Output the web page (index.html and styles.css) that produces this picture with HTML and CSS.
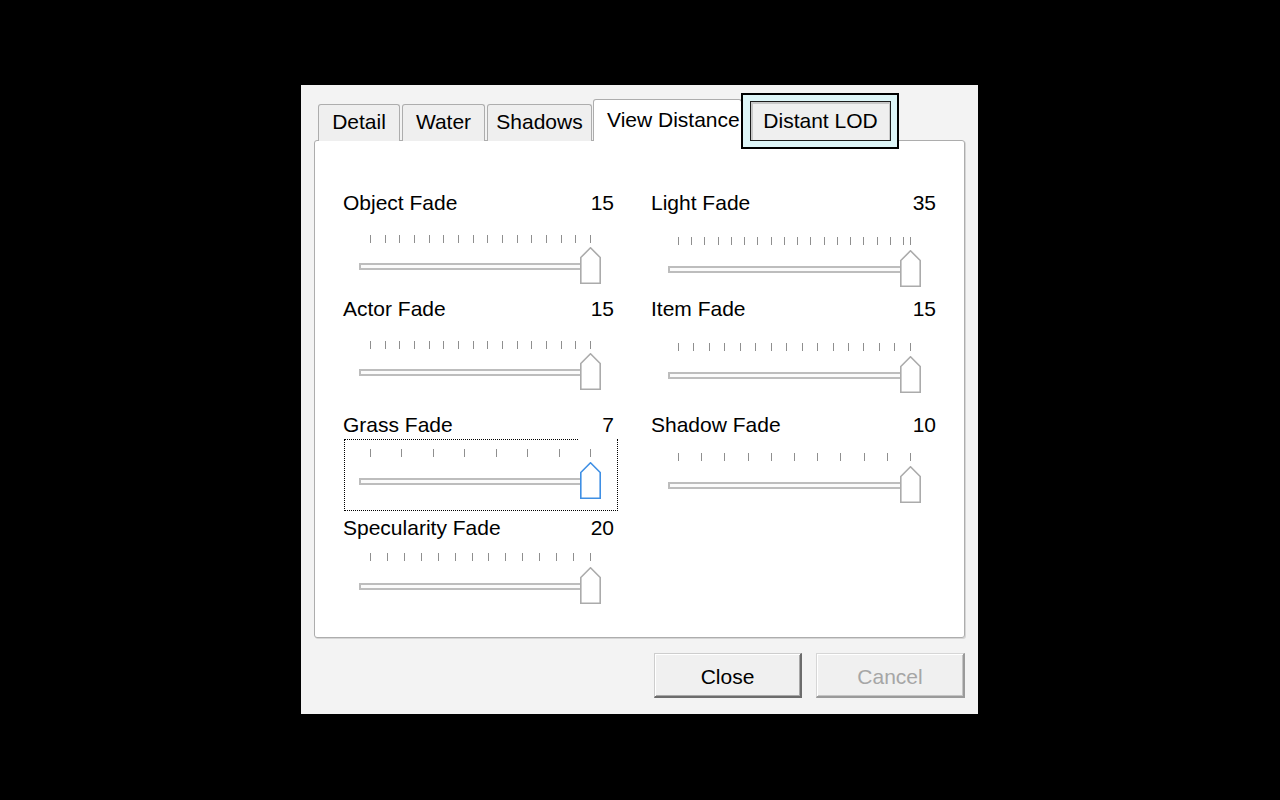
FILE: index.html
```html
<!DOCTYPE html>
<html>
<head>
<meta charset="utf-8">
<link rel="stylesheet" href="styles.css">
</head>
<body>
<div class="dialog">
  <div class="tabs">
    <div class="tab tab-detail">Detail</div>
    <div class="tab tab-water">Water</div>
    <div class="tab tab-shadows">Shadows</div>
    <div class="tab tab-active">View Distance</div>
    <div class="tab-focus"><div class="tab tab-lod">Distant LOD</div></div>
  </div>
  <div class="panel">
    <div class="col col-left">
      <div class="field">
        <div class="head"><span>Object Fade</span><span>15</span></div>
        <div class="slider st-21">
          <div class="ticks"><i></i><i></i><i></i><i></i><i></i><i></i><i></i><i></i><i></i><i></i><i></i><i></i><i></i><i></i><i></i><i></i></div>
          <div class="rail rt-4"><div class="track"></div><svg class="thumb" viewBox="0 0 21 37" width="21" height="37"><polygon points="0.8,10.5 10.5,0.8 20.2,10.5 20.2,36.2 0.8,36.2"/></svg></div>
        </div>
      </div>
      <div class="field fm-14">
        <div class="head"><span>Actor Fade</span><span>15</span></div>
        <div class="slider st-21">
          <div class="ticks"><i></i><i></i><i></i><i></i><i></i><i></i><i></i><i></i><i></i><i></i><i></i><i></i><i></i><i></i><i></i><i></i></div>
          <div class="rail rt-4"><div class="track"></div><svg class="thumb" viewBox="0 0 21 37" width="21" height="37"><polygon points="0.8,10.5 10.5,0.8 20.2,10.5 20.2,36.2 0.8,36.2"/></svg></div>
        </div>
      </div>
      <div class="field fm-24">
        <div class="head"><span>Grass Fade</span><span>7</span></div>
        <div class="slider slider-focused st-13">
          <div class="ticks"><i></i><i></i><i></i><i></i><i></i><i></i><i></i><i></i></div>
          <div class="rail rt-5"><div class="track"></div><svg class="thumb thumb-active" viewBox="0 0 21 37" width="21" height="37"><polygon points="0.8,10.5 10.5,0.8 20.2,10.5 20.2,36.2 0.8,36.2"/></svg></div>
        </div>
      </div>
      <div class="field fm-18">
        <div class="head"><span>Specularity Fade</span><span>20</span></div>
        <div class="slider st-14">
          <div class="ticks"><i></i><i></i><i></i><i></i><i></i><i></i><i></i><i></i><i></i><i></i><i></i><i></i><i></i><i></i></div>
          <div class="rail rt-6"><div class="track"></div><svg class="thumb" viewBox="0 0 21 37" width="21" height="37"><polygon points="0.8,10.5 10.5,0.8 20.2,10.5 20.2,36.2 0.8,36.2"/></svg></div>
        </div>
      </div>
    </div>
    <div class="col col-right">
      <div class="field">
        <div class="head"><span>Light Fade</span><span>35</span></div>
        <div class="slider st-23">
          <div class="ticks"><div class="tick-group"><i></i><i></i><i></i><i></i><i></i><i></i><i></i><i></i><i></i><i></i><i></i><i></i><i></i><i></i><i></i><i></i><i></i><i></i></div><i class="tick-end"></i></div>
          <div class="rail rt-5"><div class="track"></div><svg class="thumb" viewBox="0 0 21 37" width="21" height="37"><polygon points="0.8,10.5 10.5,0.8 20.2,10.5 20.2,36.2 0.8,36.2"/></svg></div>
        </div>
      </div>
      <div class="field fm-11">
        <div class="head"><span>Item Fade</span><span>15</span></div>
        <div class="slider st-23">
          <div class="ticks"><i></i><i></i><i></i><i></i><i></i><i></i><i></i><i></i><i></i><i></i><i></i><i></i><i></i><i></i><i></i><i></i></div>
          <div class="rail rt-5"><div class="track"></div><svg class="thumb" viewBox="0 0 21 37" width="21" height="37"><polygon points="0.8,10.5 10.5,0.8 20.2,10.5 20.2,36.2 0.8,36.2"/></svg></div>
        </div>
      </div>
      <div class="field fm-21">
        <div class="head"><span>Shadow Fade</span><span>10</span></div>
        <div class="slider st-17">
          <div class="ticks"><i></i><i></i><i></i><i></i><i></i><i></i><i></i><i></i><i></i><i></i><i></i></div>
          <div class="rail rt-5"><div class="track"></div><svg class="thumb" viewBox="0 0 21 37" width="21" height="37"><polygon points="0.8,10.5 10.5,0.8 20.2,10.5 20.2,36.2 0.8,36.2"/></svg></div>
        </div>
      </div>
    </div>
  </div>
  <div class="buttons">
    <button class="btn btn-close">Close</button>
    <button class="btn btn-cancel">Cancel</button>
  </div>
</div>
</body>
</html>
```

FILE: styles.css
```css
html, body {
  margin: 0;
  background: #000;
}
body {
  padding: 85px 0 0 301px;
  font-family: "Liberation Sans", Arial, sans-serif;
  font-size: 21px;
  color: #000;
}
.dialog {
  box-sizing: border-box;
  width: 677px;
  height: 629px;
  background: #f3f3f3;
  padding: 8px 13px 0;
}

/* tabs */
.tabs {
  display: flex;
  align-items: flex-end;
  height: 48px;
  padding-left: 4px;
}
.tab {
  box-sizing: border-box;
  height: 37px;
  border: 1px solid #adadad;
  border-bottom: none;
  border-radius: 3px 3px 0 0;
  background: #efefef;
  line-height: 34px;
  text-align: center;
  white-space: nowrap;
}
.tab-detail { width: 82px; margin-right: 2px; }
.tab-water { width: 83px; margin-right: 2px; }
.tab-shadows { width: 105px; margin-right: 1px; }
.tab-active {
  position: relative;
  z-index: 1;
  width: 149px;
  height: 42px;
  background: #fff;
  text-align: left;
  padding-left: 13px;
  line-height: 40px;
  overflow: hidden;
}
.tab-focus {
  position: relative;
  z-index: 2;
  box-sizing: border-box;
  width: 158px;
  height: 56px;
  margin-left: -1px;
  margin-bottom: -8px;
  border: 2px solid #000;
  background: #ddf5f7;
  padding: 6px 6px 0 7px;
}
.tab-lod {
  width: 141px;
  height: 40px;
  border: 1px solid #1c1c1c;
  border-radius: 0;
  background: #efefef;
  box-shadow: inset 2px 2px 0 #c8c8c8, inset -1px 0 0 #c8c8c8;
  line-height: 38px;
}

/* panel */
.panel {
  box-sizing: border-box;
  height: 498px;
  margin-top: -1px;
  border: 1px solid #adadad;
  border-radius: 3px;
  background: #fff;
  box-shadow: 1px 1px 0 #d6d6d6;
  padding: 51px 28px 0;
  display: grid;
  grid-template-columns: 271px 285px;
  column-gap: 37px;
  align-items: start;
}
.col {
  display: flex;
  flex-direction: column;
}
.head {
  display: flex;
  justify-content: space-between;
  line-height: 22px;
  white-space: nowrap;
}
.fm-11 { margin-top: 11px; }
.fm-14 { margin-top: 14px; }
.fm-18 { margin-top: 18px; }
.fm-21 { margin-top: 21px; }
.fm-24 { margin-top: 24px; }

.slider {
  padding: 0 13px 0 16px;
}
.col-right .slider {
  padding: 0 15px 0 17px;
}
.st-13 { margin-top: 13px; }
.st-14 { margin-top: 14px; }
.st-17 { margin-top: 17px; }
.st-21 { margin-top: 21px; }
.st-23 { margin-top: 23px; }

.ticks {
  display: flex;
  justify-content: space-between;
  height: 8px;
  margin: 0 10px 0 11px;
}
.col-right .ticks {
  margin: 0 10px 0 10px;
}
.ticks i {
  display: block;
  width: 1px;
  height: 8px;
  background: #8f8f8f;
}
.tick-group {
  flex: 1;
  display: flex;
  justify-content: space-between;
}
.ticks .tick-end {
  margin-left: 6px;
}

.rail {
  display: flex;
  align-items: flex-start;
}
.rt-4 { margin-top: 4px; }
.rt-5 { margin-top: 5px; }
.rt-6 { margin-top: 6px; }
.track {
  flex: 1;
  box-sizing: border-box;
  height: 7px;
  margin-top: 16px;
  border: 2px solid #bdbdbd;
  border-right: none;
  background: #fbfbfb;
}
.thumb {
  display: block;
  flex: none;
}
.thumb polygon {
  fill: #fff;
  stroke: #ababab;
  stroke-width: 1.6;
}
.thumb-active polygon {
  stroke: #3f8fe4;
}

.slider-focused {
  position: relative;
}
.slider-focused::before {
  content: "";
  position: absolute;
  top: -10px;
  left: 1px;
  width: 234px;
  border-top: 1px dotted #000;
}
.slider-focused::after {
  content: "";
  position: absolute;
  top: -10px;
  bottom: -12px;
  left: 1px;
  right: -4px;
  border: 1px dotted #000;
  border-top: none;
}

/* buttons */
.buttons {
  display: flex;
  justify-content: flex-end;
  gap: 14px;
  margin-top: 15px;
}
.btn {
  box-sizing: border-box;
  height: 45px;
  font-family: "Liberation Sans", Arial, sans-serif;
  font-size: 21px;
  background: #f0f0f0;
  border-style: solid;
  border-width: 1px 2px 2px 1px;
  border-color: #cdcdcd #6c6c6c #6c6c6c #cdcdcd;
  box-shadow: inset 1px 1px 0 #fff, inset -1px -1px 0 #a8a8a8;
  padding: 4px 0 0;
  border-radius: 0;
}
.btn-close {
  width: 148px;
  color: #000;
}
.btn-cancel {
  width: 149px;
  color: #a6a6a6;
  border-color: #d6d6d6 #9a9a9a #9a9a9a #d6d6d6;
  box-shadow: inset 1px 1px 0 #fff, inset -1px -1px 0 #c4c4c4;
}
```
